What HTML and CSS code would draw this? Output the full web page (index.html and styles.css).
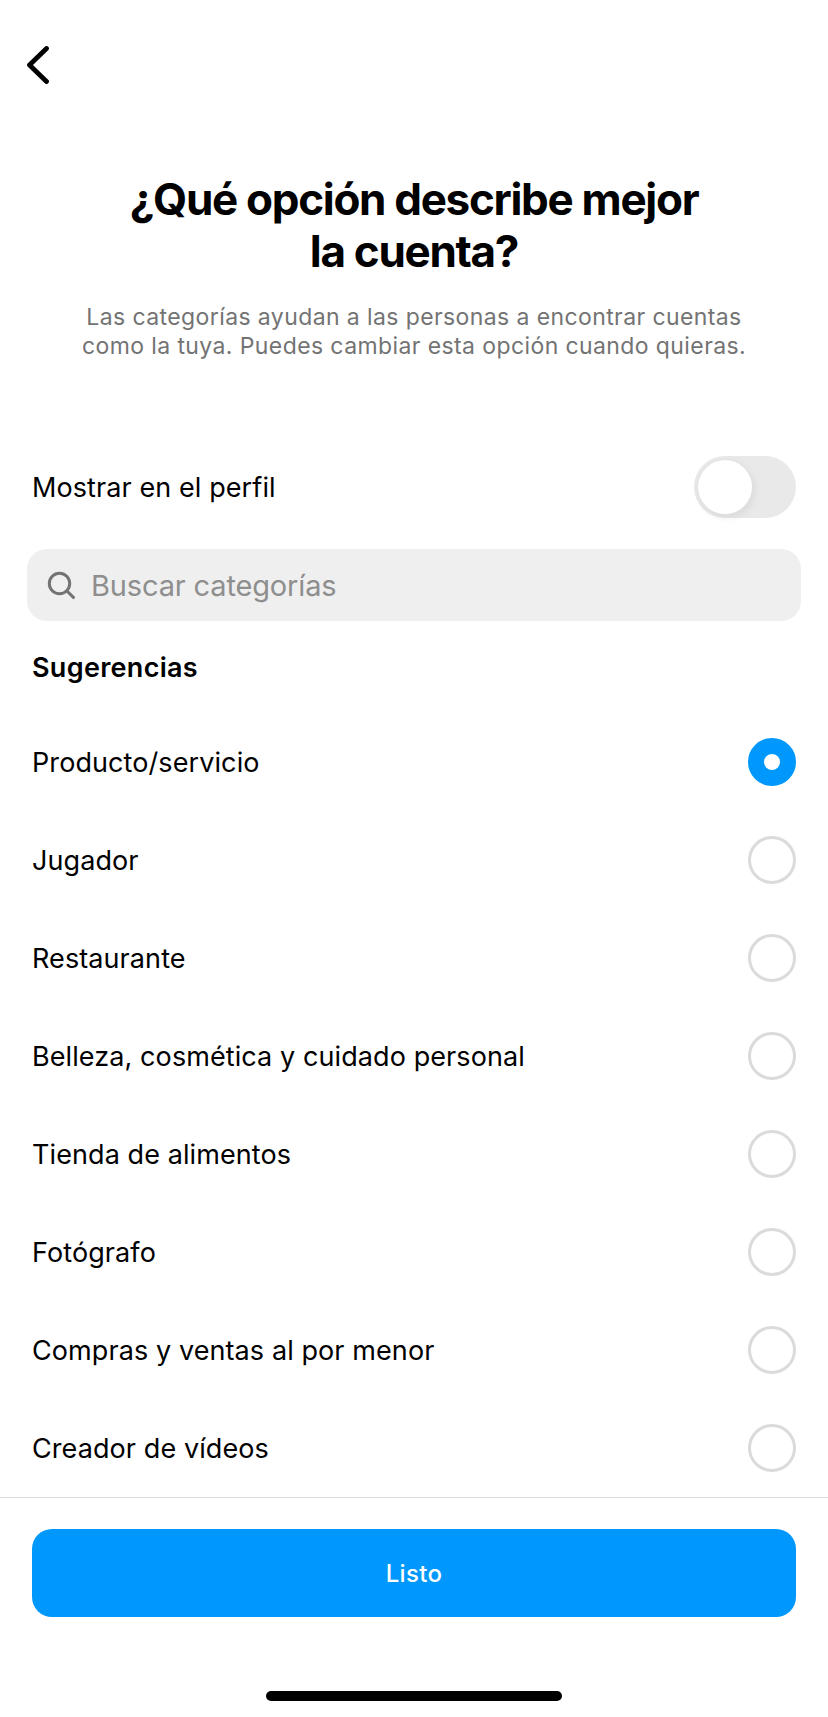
FILE: index.html
```html
<!DOCTYPE html>
<html lang="es">
<head>
<meta charset="utf-8">
<title>Categoría</title>
<link rel="stylesheet" href="styles.css">
</head>
<body>
<main class="screen">
  <header class="topbar">
    <svg class="back" width="24" height="38" viewBox="0 0 24 38" aria-label="Atrás"><path d="M20.5 2.5 3.5 19l17 16.5" fill="none" stroke="#000" stroke-width="4.8" stroke-linecap="round" stroke-linejoin="round"/></svg>
  </header>
  <section class="intro">
    <h1 class="title">¿Qué opción describe mejor<br>la cuenta?</h1>
    <p class="subtitle">Las categorías ayudan a las personas a encontrar cuentas<br>como la tuya. Puedes cambiar esta opción cuando quieras.</p>
  </section>
  <section class="content">
    <div class="toggle-row">
      <span class="label">Mostrar en el perfil</span>
      <span class="switch"><span class="knob"></span></span>
    </div>
    <div class="search">
      <svg class="search-icon" width="28" height="28" viewBox="0 0 28 28"><circle cx="12.5" cy="12.5" r="10.2" fill="none" stroke="#737373" stroke-width="3"/><path d="M20 20l6.4 6.4" fill="none" stroke="#737373" stroke-width="3" stroke-linecap="round"/></svg>
      <span class="placeholder">Buscar categorías</span>
    </div>
    <h2 class="section-title">Sugerencias</h2>
    <ul class="options">
      <li class="option"><span class="label">Producto/servicio</span><span class="radio radio-on"></span></li>
      <li class="option"><span class="label">Jugador</span><span class="radio"></span></li>
      <li class="option"><span class="label">Restaurante</span><span class="radio"></span></li>
      <li class="option"><span class="label">Belleza, cosmética y cuidado personal</span><span class="radio"></span></li>
      <li class="option"><span class="label">Tienda de alimentos</span><span class="radio"></span></li>
      <li class="option"><span class="label">Fotógrafo</span><span class="radio"></span></li>
      <li class="option"><span class="label">Compras y ventas al por menor</span><span class="radio"></span></li>
      <li class="option"><span class="label">Creador de vídeos</span><span class="radio"></span></li>
    </ul>
  </section>
  <footer class="footer">
    <button class="done" type="button">Listo</button>
    <div class="home-bar"></div>
  </footer>
</main>
</body>
</html>
```
FILE: styles.css
```css
* { box-sizing: border-box; }
html, body { margin: 0; padding: 0; background: #fff; }
body { font-family: Inter, "Liberation Sans", sans-serif; color: #000; }
.screen { width: 828px; height: 1717px; display: flex; flex-direction: column; overflow: hidden; }
.topbar { height: 173px; padding: 46px 0 0 26px; }
.back { display: block; }
.intro { text-align: center; }
.title { margin: 0; font-size: 44px; line-height: 52px; font-weight: 700; letter-spacing: -1.3px; }
.subtitle { margin: 26px 0 0; font-size: 23px; line-height: 29px; color: #737373; letter-spacing: 0.4px; }
.content { padding: 95px 32px 0; }
.toggle-row { display: flex; align-items: center; justify-content: space-between; height: 62px; }
.label { font-size: 27px; line-height: 36px; letter-spacing: 0.09px; padding-top: 2px; }
.switch { width: 102px; height: 62px; border-radius: 31px; background: #e9e9ea; padding: 4px; display: block; }
.knob { display: block; width: 54px; height: 54px; border-radius: 50%; background: #fff; box-shadow: 0 0 0 1px #e2e2e2, 2px 3px 8px rgba(0,0,0,.08); }
.search { margin: 31px -5px 0; height: 72px; border-radius: 20px; background: #efefef; display: flex; align-items: center; gap: 16px; padding-left: 20px; }
.search-icon { flex: none; }
.placeholder { font-size: 29px; line-height: 36px; color: #8e8e8e; letter-spacing: -0.15px; padding-top: 2px; }
.section-title { margin: 0; padding: 29px 0 27px; font-size: 27px; line-height: 36px; font-weight: 600; letter-spacing: 0.3px; }
.options { list-style: none; margin: 0; padding: 0; }
.option { height: 98px; display: flex; align-items: center; justify-content: space-between; }
.radio { width: 48px; height: 48px; border-radius: 50%; border: 3px solid #dbdbdb; background: #fff; }
.radio-on { border: 16px solid #0098fd; }
.footer { border-top: 1px solid #dbdbdb; padding: 31px 32px 0; }
.done { display: block; width: 100%; height: 88px; border: 0; border-radius: 20px; background: #0098fd; color: #fff; font: 500 24px Inter, "Liberation Sans", sans-serif; letter-spacing: 0.3px; }
.home-bar { width: 296px; height: 10px; border-radius: 5px; background: #000; margin: 74px auto 0; }
```
